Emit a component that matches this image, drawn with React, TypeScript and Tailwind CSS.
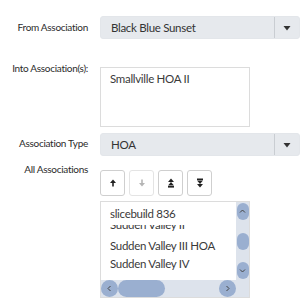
import React from "react";

const font = { fontFamily: 'Lato, "Noto Sans", sans-serif' };

function Caret() {
  return (
    <svg width="8" height="6" viewBox="0 0 8 6" className="text-[#333]">
      <path d="M0.5 1h7L4 5.5z" fill="currentColor" />
    </svg>
  );
}

function Select({ value }: { value: string }) {
  return (
    <div className="flex h-[23px] w-[200px] items-center rounded-[3px] border border-[#e3e6ea] bg-[#e6e9ed]">
      <span className="flex-1 pl-[10px] text-[11.5px] tracking-[-0.3px] text-[#333]">{value}</span>
      <div className="flex h-full w-[25px] items-center justify-center border-l border-[#c9cdd2]">
        <Caret />
      </div>
    </div>
  );
}

function ArrowIcon({ kind, disabled }: { kind: "up" | "down" | "top" | "bottom"; disabled?: boolean }) {
  const color = disabled ? "#b5b5b5" : "#222";
  return (
    <svg width="10" height="10" viewBox="0 0 10 10">
      {kind === "up" && (
        <>
          <path d="M5 1.5L8 5H2z" fill={color} />
          <rect x="4.2" y="4.5" width="1.6" height="4" fill={color} />
        </>
      )}
      {kind === "down" && (
        <>
          <path d="M5 8.5L8 5H2z" fill={color} />
          <rect x="4.2" y="1.5" width="1.6" height="4" fill={color} />
        </>
      )}
      {kind === "top" && (
        <>
          <path d="M5 0.5L8 4H2z" fill={color} />
          <path d="M5 4L8 7.5H2z" fill={color} />
          <rect x="2" y="8" width="6" height="1.6" fill={color} />
        </>
      )}
      {kind === "bottom" && (
        <>
          <rect x="2" y="0.5" width="6" height="1.6" fill={color} />
          <path d="M5 6L8 2.5H2z" fill={color} />
          <path d="M5 9.5L8 6H2z" fill={color} />
        </>
      )}
    </svg>
  );
}

function MoveButton({ kind, disabled }: { kind: "up" | "down" | "top" | "bottom"; disabled?: boolean }) {
  return (
    <button
      className={`flex h-[26px] w-[25px] items-center justify-center rounded-[3px] border bg-white ${
        disabled ? "border-[#e4e4e4]" : "border-[#cfcfcf]"
      }`}
    >
      <ArrowIcon kind={kind} disabled={disabled} />
    </button>
  );
}

function Chevron({ dir }: { dir: "up" | "down" | "left" | "right" }) {
  const d = {
    up: "M2 5.5L4.5 3L7 5.5",
    down: "M2 3.5L4.5 6L7 3.5",
    left: "M5.5 2L3 4.5L5.5 7",
    right: "M3.5 2L6 4.5L3.5 7",
  }[dir];
  return (
    <svg width="9" height="9" viewBox="0 0 9 9">
      <path d={d} fill="none" stroke="#444" strokeWidth="1" />
    </svg>
  );
}

function AssociationList() {
  const rows = ["Sudden Valley III HOA", "Sudden Valley IV"];
  return (
    <div className="flex w-[150px] flex-col border border-[#dcdcdc] bg-[#dde3ec]">
      <div className="flex h-[78px]">
        <div className="flex-1 overflow-hidden whitespace-nowrap bg-white pl-[9px] pt-[3px] text-[11.5px] leading-[18px] tracking-[-0.3px] text-[#3a3a3a]">
          <div>slicebuild 836</div>
          <div className="mt-[2px] h-[6px] overflow-hidden">
            <div className="-mt-[9px]">Sudden Valley II</div>
          </div>
          <div className="flex flex-col pt-[6px]">
            {rows.map((r) => (
              <div key={r}>{r}</div>
            ))}
          </div>
        </div>
        <div className="flex w-[13px] flex-col items-center justify-between py-[1px]">
          <div className="flex h-[17px] w-[12px] items-center justify-center rounded-full bg-[#9aafd0]">
            <Chevron dir="up" />
          </div>
          <div className="h-[17px] w-[12px] rounded-full bg-[#9aafd0]" />
          <div className="flex h-[17px] w-[12px] items-center justify-center rounded-full bg-[#9aafd0]">
            <Chevron dir="down" />
          </div>
        </div>
      </div>
      <div className="flex h-[17px] items-center pr-[13px]">
        <div className="flex h-[17px] w-[17px] items-center justify-center rounded-full bg-[#9aafd0]">
          <Chevron dir="left" />
        </div>
        <div className="h-[17px] w-[47px] rounded-full bg-[#9aafd0]" />
        <div className="flex-1" />
        <div className="flex h-[17px] w-[17px] items-center justify-center rounded-full bg-[#9aafd0]">
          <Chevron dir="right" />
        </div>
      </div>
    </div>
  );
}

export default function App() {
  const label = "whitespace-nowrap text-right text-[10px] tracking-[-0.3px] text-[#2b2b2b]";
  return (
    <div className="h-[306px] w-[308px] overflow-hidden bg-white" style={font}>
      <div className="grid grid-cols-[88px_1fr] gap-x-[12px] pt-[16px]">
        <div className={`${label} pt-[4px]`}>From Association</div>
        <Select value="Black Blue Sunset" />

        <div className={`${label} mt-[19px] pt-[3px]`}>Into Association(s):</div>
        <div className="mt-[28px] h-[60px] w-[150px] border border-[#dcdcdc] bg-white pl-[9px] pt-[2px] text-[11.5px] tracking-[-0.3px] text-[#3a3a3a]">
          Smallville HOA II
        </div>

        <div className={`${label} mt-[6px] pt-[3px]`}>Association Type</div>
        <div className="mt-[6px]">
          <Select value="HOA" />
        </div>

        <div className={`${label} mt-[6px]`}>All Associations</div>
        <div className="mt-[14px] flex flex-col gap-[5px]">
          <div className="flex gap-[4px]">
            <MoveButton kind="up" />
            <MoveButton kind="down" disabled />
            <MoveButton kind="top" />
            <MoveButton kind="bottom" />
          </div>
          <AssociationList />
        </div>
      </div>
    </div>
  );
}
